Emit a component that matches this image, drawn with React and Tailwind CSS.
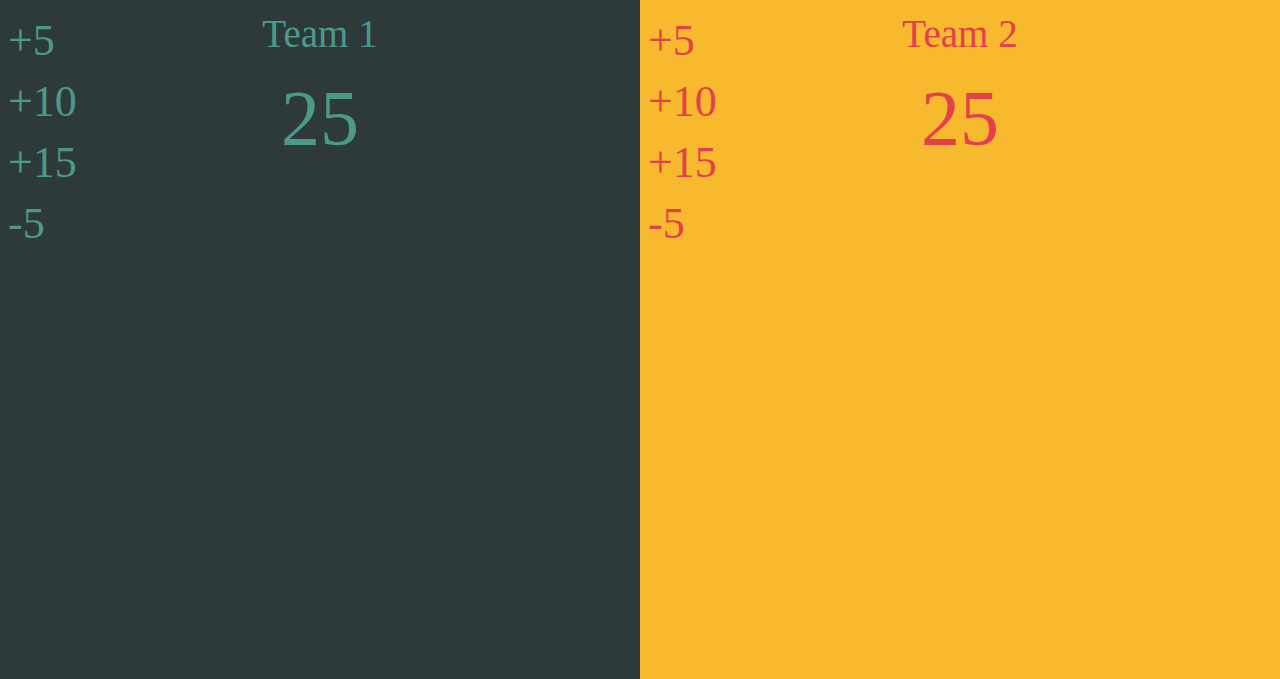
import React from 'react';

const teams = [
  { name: "Team 1", score: 25, bg: "bg-[#2e3a3a]", fg: "text-[#4a9a8a]" },
  { name: "Team 2", score: 25, bg: "bg-[#f7b92e]", fg: "text-[#e4404b]" },
];

const steps = ["+5", "+10", "+15", "-5"];

const TeamPanel = ({ team }) => (
  <div className={`grid h-full ${team.bg} ${team.fg}`}>
    <div className="col-start-1 row-start-1 flex flex-col items-start pl-2 pt-[15px] gap-[9px]">
      {steps.map((s) => (
        <button key={s} className="text-[44px] leading-[52px] cursor-pointer">
          {s}
        </button>
      ))}
    </div>
    <div className="col-start-1 row-start-1 flex flex-col items-center pt-[12px]">
      <h2 className="text-[39px] leading-[44px]">{team.name}</h2>
      <div className="text-[78px] leading-[100px] mt-[12px]">{team.score}</div>
    </div>
  </div>
);

export default function App() {
  return (
    <div className="grid grid-cols-2 h-[679px] w-full font-['Liberation_Serif',serif]">
      {teams.map((t) => (
        <TeamPanel key={t.name} team={t} />
      ))}
    </div>
  );
}
